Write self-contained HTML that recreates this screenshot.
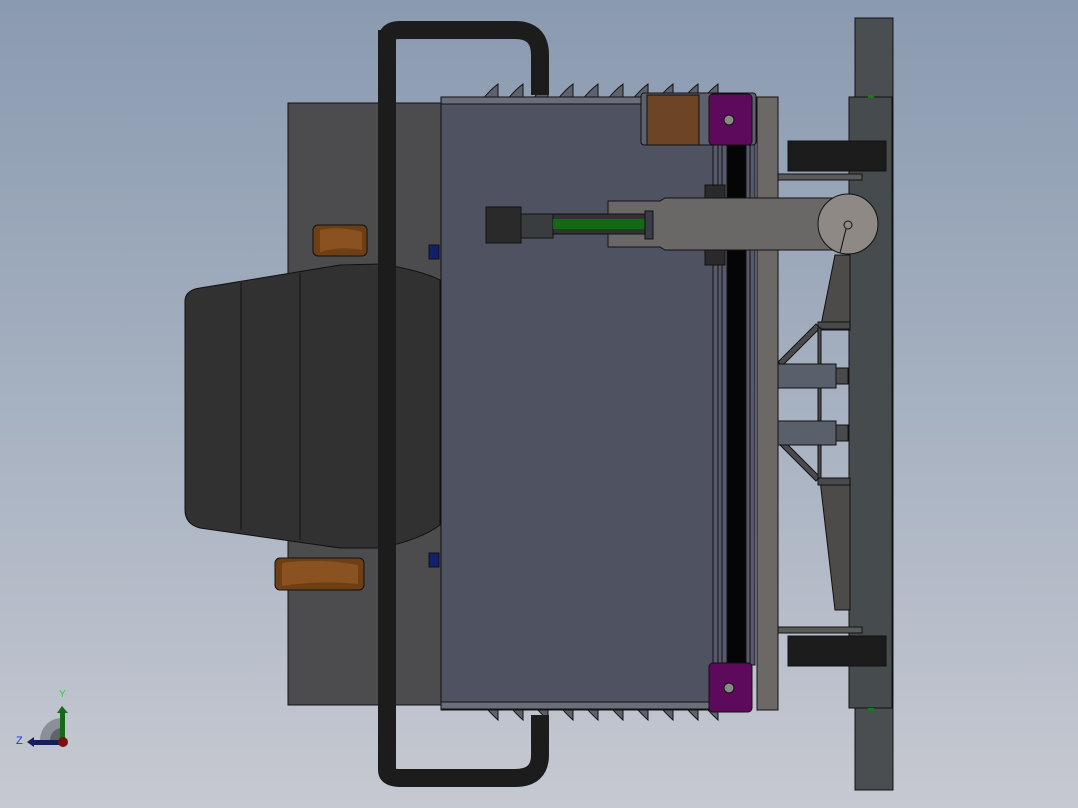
<!DOCTYPE html>
<html><head><style>
html,body{margin:0;padding:0;width:1078px;height:808px;overflow:hidden}
body{background:linear-gradient(#8a9ab0,#a6b1c1 50%,#c6c9d1);font-family:"Liberation Sans",sans-serif}
svg{position:absolute;left:0;top:0}
</style></head><body>
<svg width="1078" height="808" viewBox="0 0 1078 808" stroke="#111" stroke-width="1">
<!-- right tall frame -->
<rect x="855" y="18" width="38" height="772" fill="#4a4e50"/>
<rect x="849" y="97" width="43" height="611" fill="#464b4d"/>
<rect x="868" y="95" width="6" height="3" fill="#1a7a1a" stroke="none"/>
<rect x="868" y="708" width="6" height="3" fill="#1a7a1a" stroke="none"/>
<!-- trapezoid side pieces -->
<path d="M835 255 L850 255 L850 330 L820 330 Z" fill="#4d4b4a"/>
<path d="M820 480 L850 480 L850 610 L835 610 Z" fill="#4d4b4a"/>
<!-- struts -->
<g fill="#4a4a4c">
<rect x="818" y="322" width="32" height="7"/>
<rect x="818" y="478" width="32" height="7"/>
<path d="M778 362 L816 324 L820 328 L782 366 Z"/>
<path d="M778 443 L816 481 L820 477 L782 439 Z"/>
<rect x="818" y="328" width="3" height="150"/>
</g>
<g fill="#5a5f6c">
<rect x="778" y="364" width="58" height="24"/>
<rect x="778" y="421" width="58" height="24"/>
<rect x="836" y="368" width="12" height="16" fill="#4a4a4c"/>
<rect x="836" y="425" width="12" height="16" fill="#4a4a4c"/>
</g>
<!-- black pads -->
<rect x="788" y="141" width="98" height="30" fill="#1c1c1c"/>
<rect x="788" y="636" width="98" height="30" fill="#1c1c1c"/>
<rect x="778" y="174" width="84" height="6" fill="#5a5a5a"/>
<rect x="778" y="627" width="84" height="6" fill="#5a5a5a"/>
<!-- left rear panel -->
<rect x="288" y="103" width="154" height="602" fill="#4c4c4e"/>
<!-- wheels -->
<rect x="313" y="225" width="54" height="31" rx="5" fill="#6e3f12"/>
<rect x="275" y="558" width="89" height="32" rx="5" fill="#6e3f12"/>
<path d="M320 230 Q340 226 362 232 L362 250 Q340 246 320 252 Z" fill="#8a5220" stroke="none"/>
<path d="M282 563 Q320 558 358 565 L358 584 Q320 580 282 586 Z" fill="#8a5220" stroke="none"/>
<!-- seat -->
<path d="M200 288 L340 265 L380 264 Q420 270 440 280 L440 525 Q420 540 380 548 L340 548 L200 528 Q185 524 185 510 L185 300 Q186 290 200 288 Z" fill="#313131"/>
<line x1="241" y1="283" x2="241" y2="530" stroke="#111"/>
<line x1="300" y1="273" x2="300" y2="540" stroke="#111"/>
<rect x="429" y="245" width="10" height="14" fill="#10206a"/>
<rect x="429" y="553" width="10" height="14" fill="#10206a"/>
<!-- fins -->
<g fill="#5d626e">
<path d="M482 100 Q490 90 498 84 L498 100 Z M507 100 Q515 90 523 84 L523 100 Z M532 100 Q540 90 548 84 L548 100 Z M557 100 Q565 90 573 84 L573 100 Z M582 100 Q590 90 598 84 L598 100 Z M607 100 Q615 90 623 84 L623 100 Z M632 100 Q640 90 648 84 L648 100 Z M657 100 Q665 90 673 84 L673 100 Z M682 100 Q690 90 698 84 L698 100 Z M702 100 Q710 90 718 84 L718 100 Z"/>
<path d="M482 703 Q490 713 498 720 L498 703 Z M507 703 Q515 713 523 720 L523 703 Z M532 703 Q540 713 548 720 L548 703 Z M557 703 Q565 713 573 720 L573 703 Z M582 703 Q590 713 598 720 L598 703 Z M607 703 Q615 713 623 720 L623 703 Z M632 703 Q640 713 648 720 L648 703 Z M657 703 Q665 713 673 720 L673 703 Z M682 703 Q690 713 698 720 L698 703 Z M702 703 Q710 713 718 720 L718 703 Z"/>
</g>
<!-- main panel -->
<rect x="441" y="97" width="277" height="613" fill="#4e5261"/>
<rect x="441" y="97" width="277" height="7" fill="#6a6e7a"/>
<rect x="441" y="702" width="277" height="7" fill="#6a6e7a"/>
<!-- rail -->
<rect x="713" y="140" width="42" height="525" fill="#56596a"/>
<rect x="727" y="140" width="19" height="525" fill="#050505"/>
<line x1="718" y1="140" x2="718" y2="665"/><line x1="722" y1="140" x2="722" y2="665"/><line x1="750" y1="140" x2="750" y2="665"/>
<!-- right bar -->
<rect x="757" y="97" width="21" height="613" fill="#6b6866"/>
<!-- motor & blocks -->
<rect x="641" y="93" width="115" height="52" rx="3" fill="#5d616d"/>
<rect x="647" y="95" width="52" height="50" fill="#6b4526"/>
<rect x="709" y="94" width="43" height="51" rx="4" fill="#5e0a5c"/>
<circle cx="729" cy="120" r="5" fill="#888"/>
<rect x="709" y="663" width="43" height="49" rx="4" fill="#5e0a5c"/>
<circle cx="729" cy="688" r="5" fill="#888"/>
<!-- arm -->
<rect x="705" y="185" width="20" height="80" fill="#2a2a2a"/>
<path d="M608 201 L660 201 L665 198 L840 198 L840 250 L665 250 L660 247 L608 247 Q608 201 608 201 Z" fill="#6a6866"/>
<circle cx="848" cy="224" r="30" fill="#8e8984"/>
<circle cx="848" cy="225" r="4" fill="#8e8984"/>
<line x1="846" y1="229" x2="840" y2="253"/>
<rect x="486" y="207" width="35" height="36" fill="#2a2a2a"/>
<rect x="521" y="214" width="32" height="24" fill="#3a3d40"/>
<rect x="553" y="214" width="100" height="20" fill="#2f3433"/>
<rect x="553" y="219" width="97" height="10" fill="#126a14" stroke="none"/>
<rect x="645" y="211" width="8" height="28" fill="#3a3d48"/>
<!-- pipe -->
<path d="M387 40 Q387 30 400 30 L515 30 Q540 30 540 55 L540 95" fill="none" stroke="#1c1c1c" stroke-width="18"/>
<path d="M387 30 L387 770 Q387 778 400 778 L515 778 Q540 778 540 755 L540 715" fill="none" stroke="#1c1c1c" stroke-width="18"/>
<!-- triad -->
<path d="M40 740 A22 22 0 0 1 62 718 L62 740 Z" fill="#8b8f97" stroke="none"/>
<path d="M50 740 A12 12 0 0 1 62 728 L62 740 Z" fill="#606468" stroke="none"/>
<rect x="60" y="712" width="5" height="28" fill="#166a16" stroke="none"/>
<path d="M57 713 L62 706 L68 713 Z" fill="#166a16" stroke="none"/>
<rect x="33" y="740" width="30" height="5" fill="#12205e" stroke="none"/>
<path d="M34 737 L27 742 L34 747 Z" fill="#12205e" stroke="none"/>
<circle cx="63" cy="742" r="5" fill="#7a1010" stroke="none"/>
<text x="59" y="697" font-size="10" fill="#33cc33" stroke="none" font-family="Liberation Sans">Y</text>
<text x="16" y="744" font-size="11" fill="#2233dd" stroke="none" font-family="Liberation Sans">Z</text>
</svg>
</body></html>
